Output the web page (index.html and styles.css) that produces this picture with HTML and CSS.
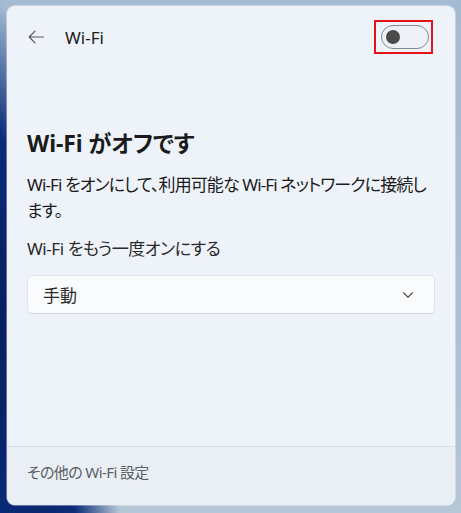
FILE: index.html
```html
<!DOCTYPE html>
<html lang="ja">
<head>
<meta charset="utf-8">
<link rel="stylesheet" href="styles.css">
</head>
<body>
<div class="panel">
  <div class="header">
    <svg class="back" width="16" height="14" viewBox="0 0 16 14"><path d="M15.5 7H1.2M7 1.2L1.2 7L7 12.8" fill="none" stroke="#5a5a5a" stroke-width="1.2" stroke-linecap="round" stroke-linejoin="round"/></svg>
    <span class="htitle">Wi-Fi</span>
    <span class="spacer"></span>
    <span class="mark"><span class="toggle"><span class="knob"></span></span></span>
  </div>
  <div class="content">
    <h1 class="title">Wi-Fi がオフです</h1>
    <p class="desc">Wi-Fi をオンにして、利用可能な Wi-Fi ネットワークに接続します。</p>
    <p class="label">Wi-Fi をもう一度オンにする</p>
    <div class="select">
      <span>手動</span>
      <svg width="12" height="8" viewBox="0 0 12 8"><path d="M1.5 1.8L6 6.2L10.5 1.8" fill="none" stroke="#555" stroke-width="1.2" stroke-linecap="round" stroke-linejoin="round"/></svg>
    </div>
  </div>
  <div class="footer">その他の Wi-Fi 設定</div>
</div>
</body>
</html>
```
FILE: styles.css
```css
html, body { margin: 0; padding: 0; }
body {
  width: 461px;
  height: 513px;
  overflow: hidden;
  font-family: "Noto Sans", "Noto Sans CJK JP", sans-serif;
  font-feature-settings: "palt";
  background:
    radial-gradient(ellipse 70px 330px at -8px 330px, #071d5c 0%, #0a2a78 60%, rgba(10,42,120,0) 100%),
    radial-gradient(ellipse 110px 90px at 10px 520px, #08215f 0%, #0c2d7a 60%, rgba(12,45,122,0) 100%),
    linear-gradient(180deg, #a4bcd3 0%, #a9c0d6 60%, #b5c6d6 100%);
  padding: 6px 6px 8px 7px;
  box-sizing: border-box;
}
.panel {
  width: 448px;
  height: 499px;
  background: #eef3f9;
  border-radius: 8px;
  display: flex;
  flex-direction: column;
  overflow: hidden;
  box-shadow: 0 0 0 1px rgba(255,255,255,0.35);
  color: #1b1b1b;
}
.header {
  display: flex;
  align-items: center;
  height: 62px;
  padding: 0 22px 0 21px;
  box-sizing: border-box;
}
.back { display: block; }
.htitle {
  margin-left: 21px;
  font-size: 17px;
  color: #1b1b1b;
}
.spacer { flex: 1; }
.mark {
  display: flex;
  border: 2px solid #e3121c;
  padding: 3px 2px 3px 5px;
  margin-top: -1px;
}
.toggle {
  width: 48px;
  height: 24px;
  box-sizing: border-box;
  border: 1px solid #85898f;
  border-radius: 12px;
  background: #edf1f6;
  display: flex;
  align-items: center;
  padding-left: 4px;
}
.knob {
  width: 14px;
  height: 14px;
  border-radius: 50%;
  background: #4b4b4b;
}
.content {
  flex: 1;
  padding: 0 20px 0 20px;
}
.title {
  margin: 60px 0 0;
  font-size: 23px;
  font-weight: 700;
  line-height: 30px;
  letter-spacing: -0.1px;
}
.desc {
  margin: 14px -4px 0 0;
  font-size: 17px;
  line-height: 26px;
  letter-spacing: -0.9px;
}
.label {
  margin: 12px 0 0;
  font-size: 17px;
  line-height: 26px;
  letter-spacing: -0.45px;
  color: #2a2a2a;
}
.select {
  margin-top: 13px;
  height: 39px;
  box-sizing: border-box;
  background: #f9fbfd;
  border: 1px solid #e0e5ec;
  border-bottom-color: #cfd5dd;
  border-radius: 5px;
  display: flex;
  align-items: center;
  justify-content: space-between;
  padding: 0 20px 0 15px;
  font-size: 17px;
  color: #2a2a2a;
}
.select svg { display: block; }
.footer {
  height: 59px;
  box-sizing: border-box;
  border-top: 1px solid #d9dfe7;
  background: #eaeff6;
  display: flex;
  align-items: center;
  padding: 0 20px 10px;
  font-size: 15px;
  letter-spacing: -0.6px;
  color: #5c5f63;
}
```
